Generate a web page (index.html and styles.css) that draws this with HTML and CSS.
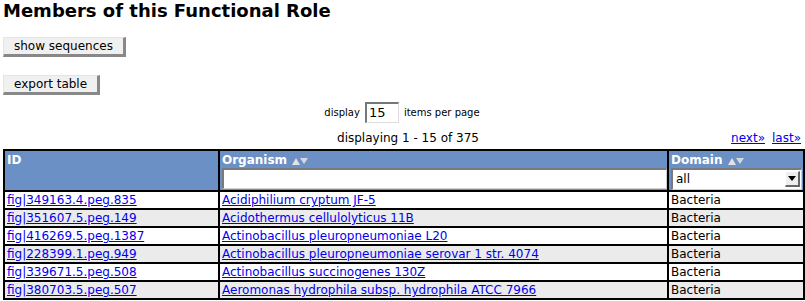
FILE: index.html
```html
<!DOCTYPE html>
<html>
<head>
<meta charset="utf-8">
<link rel="stylesheet" href="styles.css">
</head>
<body>
<h1 class="title">Members of this Functional Role</h1>
<div class="btnrow first"><button class="btn">show sequences</button></div>
<div class="btnrow second"><button class="btn">export table</button></div>
<div class="perpage">display <input class="pp-input" type="text" value="15"> items per page</div>
<div class="navrow">
  <span class="nav-spacer"></span>
  <span class="showing">displaying 1 - 15 of 375</span>
  <span class="navlinks"><a href="#">next»</a><a href="#">last»</a></span>
</div>
<table class="grid">
  <colgroup><col class="c1"><col class="c2"><col class="c3"></colgroup>
  <thead>
    <tr>
      <th><div class="hd">ID</div></th>
      <th><div class="hd">Organism <span class="sort"><i class="up"></i><i class="dn"></i></span></div><input class="filter" type="text"></th>
      <th><div class="hd">Domain <span class="sort"><i class="up"></i><i class="dn"></i></span></div>
        <div class="selwrap"><span class="selval">all</span><span class="selbtn"><i class="seltri"></i></span></div></th>
    </tr>
  </thead>
  <tbody>
    <tr><td><a href="#">fig|349163.4.peg.835</a></td><td><a href="#">Acidiphilium cryptum JF-5</a></td><td>Bacteria</td></tr>
    <tr class="alt"><td><a href="#">fig|351607.5.peg.149</a></td><td><a href="#">Acidothermus cellulolyticus 11B</a></td><td>Bacteria</td></tr>
    <tr><td><a href="#">fig|416269.5.peg.1387</a></td><td><a href="#">Actinobacillus pleuropneumoniae L20</a></td><td>Bacteria</td></tr>
    <tr class="alt"><td><a href="#">fig|228399.1.peg.949</a></td><td><a href="#">Actinobacillus pleuropneumoniae serovar 1 str. 4074</a></td><td>Bacteria</td></tr>
    <tr><td><a href="#">fig|339671.5.peg.508</a></td><td><a href="#">Actinobacillus succinogenes 130Z</a></td><td>Bacteria</td></tr>
    <tr class="alt"><td><a href="#">fig|380703.5.peg.507</a></td><td><a href="#">Aeromonas hydrophila subsp. hydrophila ATCC 7966</a></td><td>Bacteria</td></tr>
  </tbody>
</table>
</body>
</html>
```

FILE: styles.css
```css
html, body { margin: 0; padding: 0; background: #fff; }
body {
  padding: 0 2px 0 3px;
  font-family: "DejaVu Sans", Verdana, sans-serif;
  font-size: 12px;
  color: #000;
}
.title {
  margin: 0;
  font-size: 18px;
  line-height: 22px;
  font-weight: bold;
}
.btnrow { height: 20px; }
.btnrow.first { margin-top: 15px; }
.btnrow.second { margin-top: 18px; }
.btn {
  font-family: "DejaVu Sans", Verdana, sans-serif;
  font-size: 12px;
  height: 20px;
  margin: 0;
  padding: 0 10px 1px 10px;
  background: #f0f0f0;
  border-style: solid;
  border-width: 1px 3px 3px 1px;
  border-color: #e4e4e4 #888 #888 #e4e4e4;
  color: #000;
  line-height: 16px;
}
.perpage {
  margin-top: 6px;
  height: 22px;
  display: flex;
  align-items: center;
  justify-content: center;
  font-size: 10px;
  gap: 5px;
  padding-right: 2px;
}
.pp-input {
  width: 29px;
  height: 18px;
  margin: 0;
  padding: 0 0 0 2px;
  border-style: solid;
  border-width: 2px 1px 1px 2px;
  border-color: #777 #ddd #ddd #777;
  font-family: "DejaVu Sans", Verdana, sans-serif;
  font-size: 13px;
}
.navrow {
  display: flex;
  height: 20px;
  align-items: center;
  margin-top: 5px;
}
.nav-spacer { flex: 1; }
.showing { flex: none; padding-left: 12px; }
.navlinks { flex: 1; display: flex; justify-content: flex-end; gap: 7px; font-size: 12px; padding-right: 2px; }
.navlinks a { color: #00e; }
.grid {
  margin-top: 1px;
  width: 800px;
  border-collapse: collapse;
  border: 2px solid #000;
  table-layout: fixed;
}
.c1 { width: 215px; }
.c2 { width: 449px; }
.c3 { width: 136px; }
.grid th, .grid td {
  border: 1px solid #000;
  border-width: 1px 2px 2px 1px;
  text-align: left;
  vertical-align: top;
}
.grid th {
  background: #6a90c5;
  color: #fff;
  height: 37px;
  padding: 2px 1px 0 2px;
  font-size: 12px;
  font-weight: bold;
}
.hd { height: 15px; line-height: 14px; }
.sort { display: inline-flex; align-items: flex-end; gap: 0; margin-left: 1px; vertical-align: -1px; }
.sort i { display: block; width: 0; height: 0; border-left: 4px solid transparent; border-right: 4px solid transparent; }
.sort .up { border-bottom: 7px solid #e3e3e3; margin-top: 2px; }
.sort .dn { border-top: 6px solid #d8d8d8; margin-bottom: 1px; }
.filter {
  display: block;
  width: 445px;
  height: 21px;
  box-sizing: border-box;
  margin: 0;
  border-style: solid;
  border-width: 2px 1px 1px 2px;
  border-color: #7a7a7a #cfcfcf #cfcfcf #7a7a7a;
  background: #fff;
}
.selwrap {
  display: flex;
  width: 131px;
  height: 22px;
  box-sizing: border-box;
  border-style: solid;
  border-width: 2px 1px 1px 2px;
  border-color: #7a7a7a #cfcfcf #cfcfcf #7a7a7a;
  background: #fff;
  color: #000;
  font-weight: normal;
  font-size: 12px;
}
.selval { flex: 1; padding-left: 3px; line-height: 18px; }
.selbtn {
  width: 15px;
  height: 16px;
  margin: 1px 1px 0 0;
  background: #eee;
  border-style: solid;
  border-width: 1px 2px 2px 1px;
  border-color: #fff #666 #666 #fff;
  display: flex;
  align-items: center;
  justify-content: center;
  box-sizing: border-box;
}
.seltri { display: block; width: 0; height: 0; border-left: 4px solid transparent; border-right: 4px solid transparent; border-top: 5px solid #000; }
.grid td {
  height: 16px;
  padding: 0 2px 0 2px;
  line-height: 16px;
  white-space: nowrap;
  overflow: hidden;
}
.grid tr.alt td { background: #ebebeb; }
.grid td a { color: #00e; text-decoration: underline; }
```
